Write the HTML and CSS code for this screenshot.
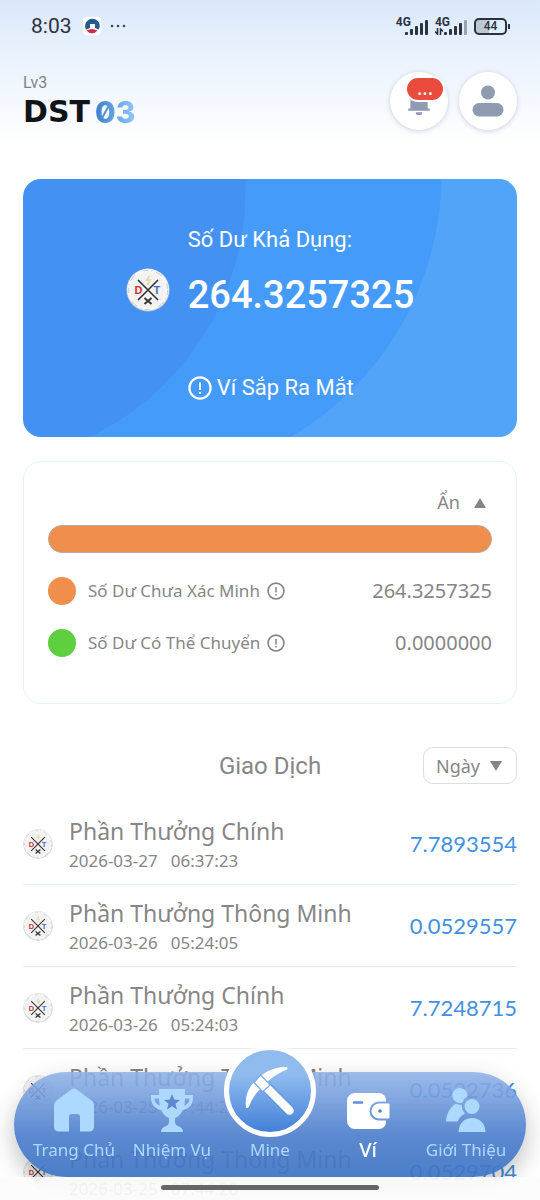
FILE: index.html
```html
<!DOCTYPE html>
<html lang="vi">
<head>
<meta charset="UTF-8">
<meta name="viewport" content="width=device-width, initial-scale=1.0">
<title>Ví</title>
<link rel="stylesheet" href="styles.css">
</head>
<body>
    <!-- shared icons -->
    <svg class="sprite" aria-hidden="true">
        <symbol id="coin" viewBox="0 0 44 44">
            <circle cx="22" cy="22" r="21.5" fill="#c9ccd0"/>
            <circle cx="22" cy="21.6" r="20.8" fill="#f7f7f7"/>
            <circle cx="22" cy="22" r="19.6" fill="none" stroke="#c4c7ca" stroke-width="1" stroke-dasharray="5 3 1 4 7 9"/>
            <circle cx="22" cy="22" r="17.5" fill="#f3f2f2"/>
            <path d="M23.500 8l-3 4h3.500l-3 5" fill="none" stroke="#e3dca6" stroke-width="1.600"/>
            <path d="M12 12l20 20M32 12L12 32" stroke="#333" stroke-width="1.600" fill="none"/>
            <path d="M18.500 30l7 6M25.500 30l-7 6" stroke="#333" stroke-width="1.800" fill="none"/>
            <text x="8.500" y="26" class="coin-d">D</text>
            <text x="27.500" y="26" class="coin-t">T</text>
        </symbol>
        <symbol id="info" viewBox="0 0 24 24">
            <circle cx="12" cy="12" r="10.600" fill="none" stroke="currentColor" stroke-width="2.200"/>
            <path d="M12 6.500v7.500M12 16v2" stroke="currentColor" stroke-width="2" fill="none"/>
        </symbol>
    </svg>

    <div class="status-bar">
        <span class="time">8:03</span>
        <svg class="app-icon" width="18" height="18" viewBox="0 0 18 18">
            <rect width="18" height="18" rx="4" fill="#fff"/>
            <path d="M3 12.500A7.300 7.300 0 1 1 15.800 12.500L12 11V7H7v4z" fill="#245a8e"/>
            <path d="M3.500 13.500q5.500-3 11 0a7 7 0 0 1-11 0z" fill="#cf2c4c"/>
        </svg>
        <svg width="16" height="4" viewBox="0 0 16 4" fill="#414a57"><circle cx="2" cy="2" r="1.300"/><circle cx="8" cy="2" r="1.300"/><circle cx="14" cy="2" r="1.300"/></svg>
        <div class="signals">
            <div class="signal">
                <span>4G</span>
                <svg width="24" height="16" viewBox="0 0 24 16" fill="#2b333f"><rect x="1" y="12" width="3" height="3" rx="1"/><rect x="6" y="9" width="3" height="6" rx="1"/><rect x="11" y="6" width="3" height="9" rx="1"/><rect x="16" y="3" width="3" height="12" rx="1"/><rect x="21" y="0" width="3" height="15" rx="1"/></svg>
            </div>
            <div class="signal">
                <span>4G</span>
                <svg width="24" height="16" viewBox="0 0 24 16" fill="#2b333f"><rect x="1" y="12" width="3" height="3" rx="1"/><rect x="6" y="9" width="3" height="6" rx="1"/><rect x="11" y="6" width="3" height="9" rx="1"/><rect x="16" y="3" width="3" height="12" rx="1"/><rect x="21" y="0" width="3" height="15" rx="1" fill="#9aa3ae"/></svg>
                <svg class="updown" width="8" height="7" viewBox="0 0 8 7"><path d="M2.500 0v6L0 3.500M5.500 7V1L8 3.500" fill="none" stroke="#2b333f" stroke-width="1.600"/></svg>
            </div>
            <div class="battery">44</div>
        </div>
    </div>

    <header class="header">
        <div>
            <div class="level">Lv3</div>
            <h1 class="brand">DST<span>03</span></h1>
        </div>
        <div class="header-buttons">
            <button class="round-button" aria-label="Thông báo">
                <svg width="24" height="28" viewBox="0 0 22 26" fill="#8e9bb0"><path d="M3 20V8a8 8 0 0 1 16 0v12h2v2H1v-2zM8 23.500h6a3 3 0 0 1-6 0z"/></svg>
                <span class="badge">...</span>
            </button>
            <button class="round-button" aria-label="Tài khoản">
                <svg width="32" height="32" viewBox="0 0 32 32" fill="#8e9bb0"><circle cx="16" cy="7.500" r="7"/><rect x="0.500" y="18" width="31" height="13.500" rx="6.500"/></svg>
            </button>
        </div>
    </header>

    <main>
        <section class="balance">
            <div class="balance-grid">
                <div class="balance-label">Số Dư Khả Dụng:</div>
                <svg class="balance-coin" width="44" height="44"><use href="#coin"/></svg>
                <div class="balance-amount">264.3257325</div>
                <div class="balance-note"><svg width="24" height="24"><use href="#info"/></svg>Ví Sắp Ra Mắt</div>
            </div>
        </section>

        <section class="panel">
            <button class="toggle">Ẩn <svg width="12" height="10" viewBox="0 0 12 10"><path d="M6 0l6 10H0z" fill="currentColor"/></svg></button>
            <div class="bar"></div>
            <div class="legend">
                <span class="dot orange"></span>
                <span>Số Dư Chưa Xác Minh</span>
                <svg width="18" height="18"><use href="#info"/></svg>
                <span class="legend-amount">264.3257325</span>
            </div>
            <div class="legend">
                <span class="dot green"></span>
                <span>Số Dư Có Thể Chuyển</span>
                <svg width="18" height="18"><use href="#info"/></svg>
                <span class="legend-amount">0.0000000</span>
            </div>
        </section>

        <section>
            <div class="list-head">
                <h2>Giao Dịch</h2>
                <div class="select-box">
                    <select aria-label="Khoảng thời gian">
                        <option>Ngày</option>
                        <option>Tháng</option>
                    </select>
                    <svg width="12" height="10" viewBox="0 0 12 10"><path d="M0 0h12L6 10z" fill="currentColor"/></svg>
                </div>
            </div>
            <ul class="list">
                <li>
                    <svg width="30" height="30"><use href="#coin"/></svg>
                    <div>
                        <div class="name">Phần Thưởng Chính</div>
                        <div class="date"><span>2026-03-27</span><span>06:37:23</span></div>
                    </div>
                    <span class="amount">7.7893554</span>
                </li>
                <li>
                    <svg width="30" height="30"><use href="#coin"/></svg>
                    <div>
                        <div class="name">Phần Thưởng Thông Minh</div>
                        <div class="date"><span>2026-03-26</span><span>05:24:05</span></div>
                    </div>
                    <span class="amount">0.0529557</span>
                </li>
                <li>
                    <svg width="30" height="30"><use href="#coin"/></svg>
                    <div>
                        <div class="name">Phần Thưởng Chính</div>
                        <div class="date"><span>2026-03-26</span><span>05:24:03</span></div>
                    </div>
                    <span class="amount">7.7248715</span>
                </li>
                <li>
                    <svg width="30" height="30"><use href="#coin"/></svg>
                    <div>
                        <div class="name">Phần Thưởng Thông Minh</div>
                        <div class="date"><span>2026-03-25</span><span>07:44:29</span></div>
                    </div>
                    <span class="amount">0.0522736</span>
                </li>
                <li>
                    <svg width="30" height="30"><use href="#coin"/></svg>
                    <div>
                        <div class="name">Phần Thưởng Thông Minh</div>
                        <div class="date"><span>2026-03-25</span><span>07:44:28</span></div>
                    </div>
                    <span class="amount">0.0529704</span>
                </li>
            </ul>
        </section>
    </main>

    <nav class="nav">
        <a href="#">
            <svg width="40" height="44" viewBox="0 0 40 44"><path d="M20 0.500c1 0 2 .4 3 1.200L37.500 12.500c1.700 1.300 2.500 2.800 2.500 5V39a4.500 4.500 0 0 1-4.500 4.500H26V29a3 3 0 0 0-3-3h-5a3 3 0 0 0-3 3v14.500H4.500A4.500 4.500 0 0 1 0 39V17.500c0-2.200.8-3.700 2.500-5L17 1.700c1-.8 2-1.200 3-1.200z" fill="currentColor"/></svg>
            Trang Chủ
        </a>
        <a href="#">
            <svg width="44" height="44" viewBox="0 0 44 44">
                <path d="M9 1h26v6h8v3c0 6-4 11-10 12-2 4-5 7-8 8v4c0 2 1 3 3 4 3 1 5 3 5 6H11c0-3 2-5 5-6 2-1 3-2 3-4v-4c-3-1-6-4-8-8C5 21 1 16 1 10V7h8zM4.500 10.500c0 3.500 2 6 5.200 7.200L9 10.500zM35 10.500l-.7 7.200c3.200-1.200 5.200-3.700 5.200-7.200z" fill="currentColor" fill-rule="evenodd"/>
                <path d="M22 6l2.200 5.500 5.800.4-4.500 3.800 1.500 5.800-5-3.200-5 3.200 1.500-5.800-4.500-3.800 5.800-.4z" fill="#5d88cf"/>
            </svg>
            Nhiệm Vụ
        </a>
        <a href="#">
            <span class="mine">
                <svg width="52" height="52" viewBox="0 0 52 52">
                    <path d="M2 43C0.500 30 5 22 12 15S30 1 43 2q1.500 2-1 3C32 9 26 14 20 20S9 31 5 41.500q-1 2-3 1.500z" fill="#fff"/>
                    <path d="M21 21L45 45" stroke="#5a92df" stroke-width="10.500" stroke-linecap="round"/>
                    <path d="M21 21L45.500 45.500" stroke="#fff" stroke-width="8.500" stroke-linecap="round"/>
                    <path d="M16.500 10L25 18.500a2 2 0 0 1 0 2.500L20 25.500a2 2 0 0 1-2.500 0L10 17.500z" fill="#fff" stroke="#7aaae8" stroke-width="1.200"/>
                </svg>
            </span>
            Mine
        </a>
        <a href="#" class="active">
            <svg width="44" height="44" viewBox="0 0 44 44">
                <path d="M9 5h24a7 7 0 0 1 7 7v1.500H33a9.500 9.500 0 0 0 0 19h7V34a7 7 0 0 1-7 7H9a8 8 0 0 1-8-8V13a8 8 0 0 1 8-8z" fill="currentColor"/>
                <path d="M33 15.500h9.500a1 1 0 0 1 1 1v13a1 1 0 0 1-1 1H33a7.500 7.500 0 0 1 0-15z" fill="currentColor"/>
                <path d="M8 14.500h8" stroke="#5f8cd4" stroke-width="2.400" stroke-linecap="round"/>
                <circle cx="34" cy="23" r="1.800" fill="#4f7fcb"/>
            </svg>
            Ví
        </a>
        <a href="#">
            <svg width="40" height="44" viewBox="0 0 40 44" fill="currentColor">
                <path d="M14 0a7.500 7.500 0 0 1 7.300 8.500 9.500 9.500 0 0 0-4.800 6A7.500 7.500 0 1 1 14 0zM10 15.500q2 1.500 6 1.500a9.500 9.500 0 0 0 3 8.500Q14 28 11.500 33.500H0C.5 26 4 19 10 15.500z"/>
                <circle cx="26" cy="18.500" r="7.500"/>
                <path d="M12.500 44c.5-9 6-14 13.500-14s13 5 13.500 14z"/>
            </svg>
            Giới Thiệu
        </a>
    </nav>
    <div class="home-bar"><span></span></div>
</body>
</html>
```

FILE: styles.css
```css
* {
    box-sizing: border-box;
}
body {
    margin: 0;
    height: 100vh;
    overflow: hidden;
    font-family: "Noto Sans", sans-serif;
    color: #868686;
    background: #fff linear-gradient(#dae8fb, #ebf3fe 60px, #fff 145px) no-repeat;
}
h1, h2, ul {
    margin: 0;
    padding: 0;
    font-weight: 400;
}
button {
    border: none;
    padding: 0;
    background: none;
    font-family: inherit;
    color: inherit;
    cursor: pointer;
}
svg {
    flex: none;
}
.sprite {
    display: none;
}
.coin-d, .coin-t {
    font-family: "Liberation Sans", sans-serif;
    font-size: 11px;
    font-weight: 700;
    fill: #cf3038;
}
.coin-t {
    fill: #4a6cc0;
}

/* status bar */
.status-bar {
    display: flex;
    align-items: center;
    height: 52px;
    padding: 0 33px 0 31px;
    font-family: Roboto, sans-serif;
    color: #2b333f;
}
.time {
    font-size: 21px;
}
.app-icon {
    margin: 0 9px 0 11px;
}
.signals {
    display: flex;
    align-items: center;
    gap: 7px;
    margin-left: auto;
}
.signal {
    position: relative;
    display: flex;
    align-items: flex-end;
    height: 20px;
    font-size: 12px;
    font-weight: 700;
}
.signal span {
    align-self: flex-start;
    line-height: 12px;
    margin-right: -7px;
}
.updown {
    position: absolute;
    left: 0;
    bottom: 1px;
}
.battery {
    position: relative;
    width: 33px;
    border: 2px solid #2b333f;
    border-radius: 5px;
    background: linear-gradient(90deg, #bcc7d5 44%, transparent 44%);
    font-size: 12px;
    font-weight: 500;
    line-height: 13px;
    text-align: center;
}
.battery::after {
    content: "";
    position: absolute;
    right: -5px;
    top: 4px;
    width: 2px;
    height: 5px;
    background: #2b333f;
}

/* header */
.header {
    display: flex;
    justify-content: space-between;
    padding: 20px 23px 0;
    height: 127px;
}
.level {
    font-family: Roboto, sans-serif;
    font-size: 16px;
    line-height: 22px;
    color: #7f8289;
}
.brand {
    display: flex;
    gap: 5px;
    font-family: "DejaVu Sans", sans-serif;
    font-size: 30px;
    font-weight: 700;
    line-height: 36px;
    color: #101418;
}
.brand span {
    font-family: Inter, sans-serif;
    font-weight: 800;
    font-feature-settings: "zero";
    background: linear-gradient(90deg, #3f7fcb, #8fc6fb);
    -webkit-background-clip: text;
    background-clip: text;
    color: transparent;
}
.header-buttons {
    display: flex;
    gap: 11px;
}
.round-button {
    position: relative;
    display: flex;
    align-items: center;
    justify-content: center;
    width: 58px;
    height: 58px;
    border-radius: 50%;
    background: #fff;
    box-shadow: 0 1px 5px rgba(60, 80, 110, 0.25);
}
.badge {
    position: absolute;
    top: 4px;
    left: 15px;
    width: 40px;
    height: 26px;
    border: 2px solid #fff;
    border-radius: 13px;
    background: #e94b3c;
    color: #fff;
    font-size: 20px;
    line-height: 20px;
}

main {
    padding: 0 23px;
}

/* balance card */
.balance {
    display: flex;
    justify-content: center;
    height: 258px;
    padding-top: 48px;
    border-radius: 18px;
    color: #fff;
    font-family: Roboto, sans-serif;
    background:
        radial-gradient(circle at -51px 11px, #4392f3 273px, transparent 274px),
        radial-gradient(circle at 114px -5px, #459bf9 304px, transparent 305px),
        #52a4f8;
}
.balance-grid {
    display: grid;
    grid-template-columns: 44px auto;
    column-gap: 18px;
    align-content: start;
}
.balance-label {
    grid-column: 2;
    font-size: 22px;
    line-height: 26px;
}
.balance-coin {
    margin-top: 15px;
}
.balance-amount {
    font-size: 38px;
    font-weight: 500;
    line-height: 48px;
    margin-top: 18px;
}
.balance-note {
    grid-column: 2;
    display: flex;
    align-items: center;
    gap: 5px;
    margin-top: 56px;
    font-size: 22px;
    line-height: 26px;
}

/* detail panel */
.panel {
    margin-top: 24px;
    padding: 28px 24px 46px;
    border: 1px solid #e3f3f8;
    border-radius: 18px;
}
.toggle {
    display: flex;
    align-items: center;
    gap: 14px;
    margin-left: auto;
    padding-right: 6px;
    font-size: 18px;
    line-height: 25px;
}
.bar {
    height: 28px;
    margin-top: 10px;
    border: 1px solid #b8aaa0;
    border-radius: 14px;
    background: #f08e4c;
}
.legend {
    display: flex;
    align-items: center;
    margin-top: 24px;
    font-size: 17px;
    line-height: 28px;
}
.legend svg {
    margin-left: 7px;
}
.dot {
    width: 28px;
    height: 28px;
    margin-right: 12px;
    border-radius: 50%;
}
.orange {
    background: #f08e4c;
}
.green {
    background: #5ecf3e;
}
.legend-amount {
    margin-left: auto;
    font-size: 20px;
}

/* transactions */
.list-head {
    display: grid;
    grid-template-columns: 1fr auto 1fr;
    align-items: center;
    margin: 43px 0 19px;
}
.list-head h2 {
    grid-column: 2;
    font-family: Roboto, sans-serif;
    font-size: 24px;
}
.select-box {
    display: flex;
    align-items: center;
    justify-self: end;
    width: 94px;
    height: 37px;
    padding: 0 14px 0 12px;
    border: 1px solid #dedede;
    border-radius: 10px;
}
.select-box select {
    flex: 1;
    min-width: 0;
    padding: 0;
    border: none;
    background: none;
    appearance: none;
    font-family: inherit;
    font-size: 18px;
    color: inherit;
}
.list {
    list-style: none;
}
.list li {
    display: flex;
    align-items: center;
    gap: 16px;
    height: 82px;
    border-bottom: 1px solid #e0f0f7;
}
.name {
    font-size: 23px;
    line-height: 34px;
}
.date {
    display: flex;
    gap: 13px;
    font-size: 17px;
    line-height: 26px;
}
.amount {
    margin-left: auto;
    font-family: Lato, sans-serif;
    font-size: 22px;
    color: #4290e2;
}

/* bottom navigation */
.nav {
    position: fixed;
    left: 14px;
    right: 14px;
    bottom: 23px;
    display: flex;
    align-items: flex-end;
    height: 105px;
    padding: 0 11px 14px;
    border-radius: 53px;
    background: linear-gradient(rgba(144, 178, 232, 0.88), rgba(78, 127, 204, 0.92) 60%, rgba(62, 115, 196, 0.92));
    box-shadow: 0 10px 24px rgba(0, 0, 0, 0.25);
}
.nav a {
    flex: 1;
    display: flex;
    flex-direction: column;
    align-items: center;
    gap: 5px;
    font-size: 17px;
    line-height: 26px;
    white-space: nowrap;
    text-decoration: none;
    color: #aed9ff;
}
.nav .active {
    color: #fff;
    font-size: 20px;
    font-weight: 500;
}
.mine {
    display: flex;
    align-items: center;
    justify-content: center;
    width: 92px;
    height: 92px;
    margin-bottom: -5px;
    border: 5px solid #fff;
    border-radius: 50%;
    background: linear-gradient(#8fbbef 30%, #4380d9);
}
.home-bar {
    position: fixed;
    left: 0;
    right: 0;
    bottom: 0;
    display: flex;
    justify-content: center;
    height: 23px;
    padding-top: 8px;
    background: rgba(252, 252, 252, 0.92);
}
.home-bar span {
    width: 218px;
    height: 5px;
    border-radius: 3px;
    background: #666;
}
```
